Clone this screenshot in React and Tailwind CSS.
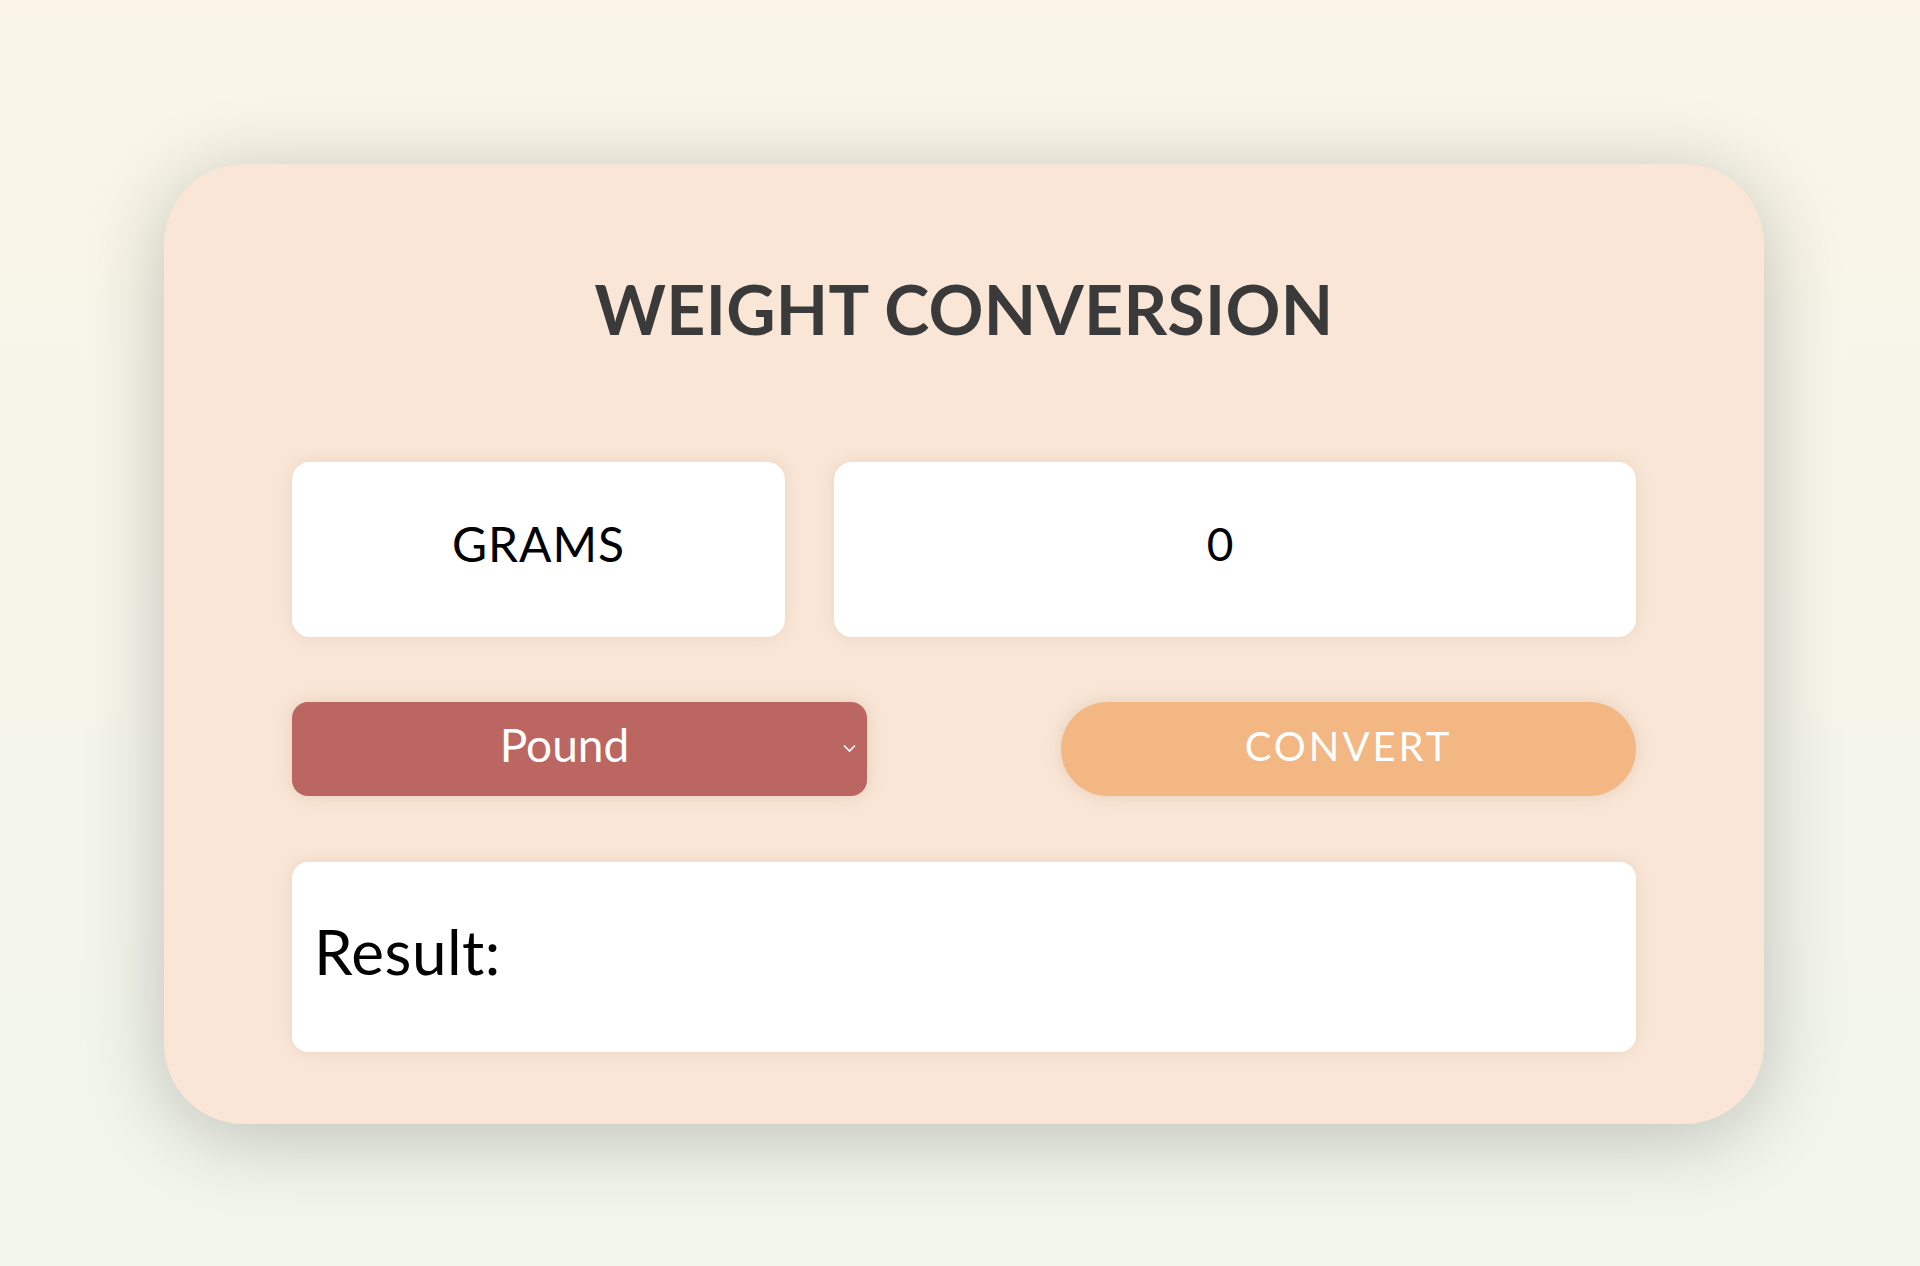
import React, { useState } from 'react';

const App = () => {
    const [amount, setAmount] = useState('0');
    const [unit, setUnit] = useState('pound');
    const [result, setResult] = useState('');

    // grams to the chosen unit
    const convert = () => {
        const g = parseFloat(amount) || 0;
        const rates = { pound: 0.00220462, kilogram: 0.001, ounce: 0.035274 };
        setResult((g * rates[unit]).toFixed(4));
    };

    return (
        <div className="min-h-screen bg-linear-to-b from-[#faf5e8] to-[#f1f5ec] flex justify-center pt-[164px] pl-[8px] font-['Lato',sans-serif]">
            <div className="w-[1600px] h-[960px] rounded-[80px] bg-[#f9e6d6] shadow-[0_12px_80px_rgba(0,0,0,0.22)] px-32">
                <h1 className="mt-[105px] h-[80px] leading-[80px] text-center text-[68px] font-bold text-[#3a3a3a] tracking-[0.3px]">
                    WEIGHT CONVERSION
                </h1>

                <div className="mt-[113px] flex gap-[49px]">
                    <div className="w-[493px] h-[175px] rounded-[18px] bg-white shadow-[0_0_16px_rgba(180,140,110,0.18)] flex items-center justify-center pb-[12px] text-[48px] text-black tracking-[1px]">
                        GRAMS
                    </div>
                    <input
                        type="text"
                        value={amount}
                        onChange={(e) => setAmount(e.target.value)}
                        className="flex-1 h-[175px] rounded-[18px] bg-white shadow-[0_0_16px_rgba(180,140,110,0.18)] text-center text-[46px] text-black pr-[30px] pb-[12px] outline-none"
                    />
                </div>

                <div className="mt-[65px] flex justify-between">
                    <div className="relative w-[575px] h-[94px]">
                        <select
                            value={unit}
                            onChange={(e) => setUnit(e.target.value)}
                            className="appearance-none w-full h-full rounded-[16px] bg-[#bc6662] text-white text-[46px] text-center pr-[30px] pb-[10px] outline-none shadow-[0_0_16px_rgba(180,140,110,0.25)]"
                        >
                            <option value="pound">Pound</option>
                            <option value="kilogram">Kilogram</option>
                            <option value="ounce">Ounce</option>
                        </select>
                        <svg className="absolute right-[11px] top-[42px] pointer-events-none" width="13" height="9" viewBox="0 0 13 9" fill="none">
                            <path d="M1 1.5L6.5 7L12 1.5" stroke="white" strokeWidth="1.6" />
                        </svg>
                    </div>
                    <button
                        onClick={convert}
                        className="w-[575px] h-[94px] rounded-full bg-[#f2b783] text-white text-[40px] tracking-[3px] pb-[6px] shadow-[0_0_16px_rgba(180,140,110,0.25)]"
                    >
                        CONVERT
                    </button>
                </div>

                <div className="mt-[66px] h-[190px] rounded-[16px] bg-white shadow-[0_0_16px_rgba(180,140,110,0.18)] flex items-center px-[22px] pb-[12px] text-[62px] tracking-[0.5px] text-black">
                    Result: {result}
                </div>
            </div>
        </div>
    );
};

export default App;
